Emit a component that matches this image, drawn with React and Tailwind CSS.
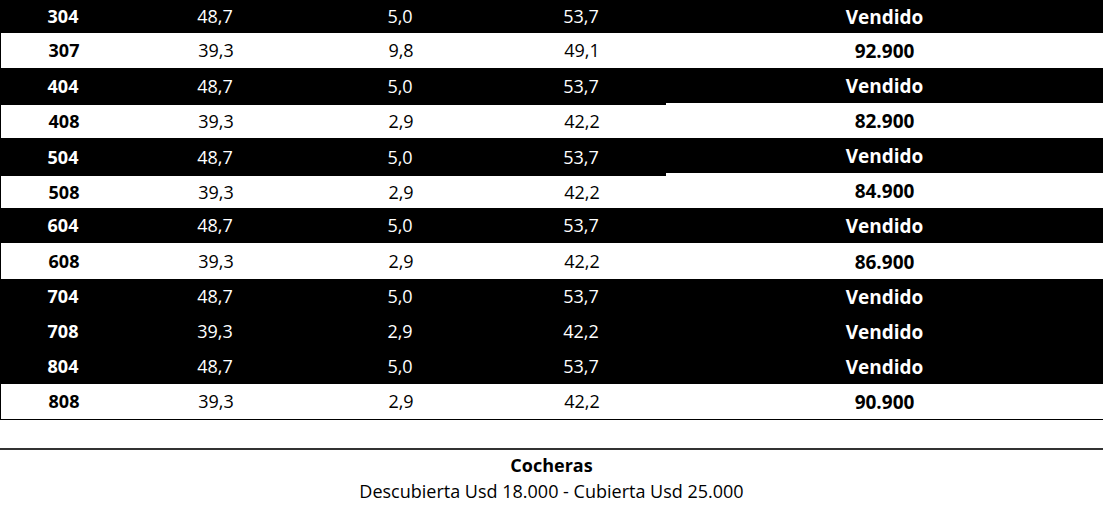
const rows = [
  { u: "304", a: "48,7", b: "5,0", c: "53,7", p: "Vendido", dark: true, lh: 33, rh: 33 },
  { u: "307", a: "39,3", b: "9,8", c: "49,1", p: "92.900", dark: false, lh: 35, rh: 35 },
  { u: "404", a: "48,7", b: "5,0", c: "53,7", p: "Vendido", dark: true, lh: 37, rh: 35 },
  { u: "408", a: "39,3", b: "2,9", c: "42,2", p: "82.900", dark: false, lh: 33, rh: 35 },
  { u: "504", a: "48,7", b: "5,0", c: "53,7", p: "Vendido", dark: true, lh: 38, rh: 35 },
  { u: "508", a: "39,3", b: "2,9", c: "42,2", p: "84.900", dark: false, lh: 32, rh: 35 },
  { u: "604", a: "48,7", b: "5,0", c: "53,7", p: "Vendido", dark: true, lh: 35, rh: 35 },
  { u: "608", a: "39,3", b: "2,9", c: "42,2", p: "86.900", dark: false, lh: 36, rh: 36 },
  { u: "704", a: "48,7", b: "5,0", c: "53,7", p: "Vendido", dark: true, lh: 35, rh: 35 },
  { u: "708", a: "39,3", b: "2,9", c: "42,2", p: "Vendido", dark: true, lh: 35, rh: 35 },
  { u: "804", a: "48,7", b: "5,0", c: "53,7", p: "Vendido", dark: true, lh: 35, rh: 35 },
  { u: "808", a: "39,3", b: "2,9", c: "42,2", p: "90.900", dark: false, lh: 35, rh: 35 },
];

const FONT = { fontFamily: '"Open Sans", "Liberation Sans", sans-serif' };

export default function App() {
  return (
    <div className="w-[1103px] h-[516px] bg-white overflow-hidden text-[18px]" style={FONT}>
      {/* price table: unit columns on the left, price column on the right */}
      <div className="flex border-b border-black">
        <div className="w-[666px]">
          {rows.map((r) => (
            <div
              key={r.u}
              style={{ height: r.lh }}
              className={
                "grid grid-cols-[126px_178px_192px_170px] items-center text-center " +
                (r.dark ? "bg-black text-white" : "bg-white text-black border-l border-black")
              }
            >
              <span className="font-bold">{r.u}</span>
              <span>{r.a}</span>
              <span>{r.b}</span>
              <span>{r.c}</span>
            </div>
          ))}
        </div>
        <div className="flex-1">
          {rows.map((r) => (
            <div
              key={r.u}
              style={{ height: r.rh }}
              className={
                "flex items-center justify-center pt-[2px] font-bold text-[19px] " +
                (r.dark ? "bg-black text-white" : "bg-white text-black")
              }
            >
              {r.p}
            </div>
          ))}
        </div>
      </div>

      {/* parking */}
      <div className="mt-[28px] border-t-2 border-[#333]" />
      <div className="pt-[2px] text-center text-black leading-[26px]">
        <div className="font-bold">Cocheras</div>
        <div>Descubierta Usd 18.000 - Cubierta Usd 25.000</div>
      </div>
    </div>
  );
}
